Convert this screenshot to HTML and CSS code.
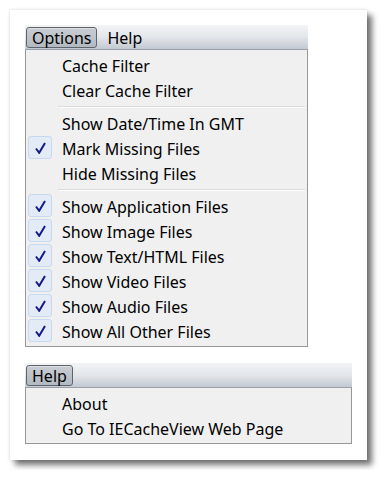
FILE: index.html
```html
<!DOCTYPE html>
<html lang="en">
<head>
  <meta charset="UTF-8" />
  <title>IECacheView menus</title>
  <link rel="stylesheet" href="styles.css">
</head>
<body>
  <div class="panel">
    <div class="menu menu-options">
      <div class="menubar">
        <span class="bar-item open">Options</span>
        <span class="bar-item">Help</span>
      </div>
      <div class="dropdown">
        <div class="item">Cache Filter</div>
        <div class="item">Clear Cache Filter</div>
        <div class="sep"></div>
        <div class="item">Show Date/Time In GMT</div>
        <div class="item checked">Mark Missing Files</div>
        <div class="item">Hide Missing Files</div>
        <div class="sep"></div>
        <div class="item checked">Show Application Files</div>
        <div class="item checked">Show Image Files</div>
        <div class="item checked">Show Text/HTML Files</div>
        <div class="item checked">Show Video Files</div>
        <div class="item checked">Show Audio Files</div>
        <div class="item checked">Show All Other Files</div>
      </div>
    </div>

    <div class="menu menu-help">
      <div class="menubar">
        <span class="bar-item open">Help</span>
      </div>
      <div class="dropdown">
        <div class="item">About</div>
        <div class="item">Go To IECacheView Web Page</div>
      </div>
    </div>
  </div>
</body>
</html>
```

FILE: styles.css
```css
body {
  margin: 0;
  padding: 10px;
  background: white;
  font-family: 'Noto Sans', 'Open Sans', sans-serif;
  font-size: 16px;
  color: black;
}

.panel {
  width: 357px;
  height: 450px;
  box-sizing: border-box;
  padding: 15px;
  background: white;
  box-shadow: 5px 5px 6px rgba(0, 0, 0, 0.55), 0 0 3px rgba(0, 0, 0, 0.15);
  display: flex;
  flex-direction: column;
  gap: 16px;
}

.menu-options {
  width: 283px;
}

.menu-help {
  width: 327px;
}

.menubar {
  height: 25px;
  box-sizing: border-box;
  padding: 2px 1px 1px 1px;
  display: flex;
  gap: 4px;
  align-items: stretch;
  background: linear-gradient(#f3f4f6, #e3e6ea 50%, #c3c9d2);
  border-bottom: 1px solid #9aa0a8;
}

.bar-item {
  padding: 0 5px;
  line-height: 20px;
  border: 1px solid transparent;
}

.bar-item.open {
  border: 1px solid #5f646b;
  border-radius: 3px;
  background: linear-gradient(#c9cdd3, #b3b9c2);
  box-shadow: inset 0 1px 0 rgba(255, 255, 255, 0.35);
}

.dropdown {
  background: #f0f0f0;
  border: 1px solid #979797;
  border-top: none;
  padding: 3px 2px 2px 2px;
}

.item {
  position: relative;
  height: 25px;
  line-height: 26px;
  padding-left: 34px;
}

.item.checked::before {
  content: '';
  position: absolute;
  left: 0;
  top: 0;
  width: 22px;
  height: 21px;
  border: 1px solid #c8d8ef;
  border-radius: 3px;
  background: #e3ebf7;
}

.item.checked::after {
  content: '';
  position: absolute;
  left: 7px;
  top: 6px;
  width: 11px;
  height: 12px;
  background: url("data:image/svg+xml,%3Csvg xmlns='http://www.w3.org/2000/svg' viewBox='0 0 11 12'%3E%3Cpath d='M1 6.5 L4.2 10.8 L10 1' fill='none' stroke='%23141a8c' stroke-width='2'/%3E%3C/svg%3E") no-repeat;
}

.sep {
  margin: 3px 0 3px 30px;
  height: 1px;
  background: #dcdcdc;
  border-bottom: 1px solid #ffffff;
  border-left: 1px solid #dcdcdc;
}
```
